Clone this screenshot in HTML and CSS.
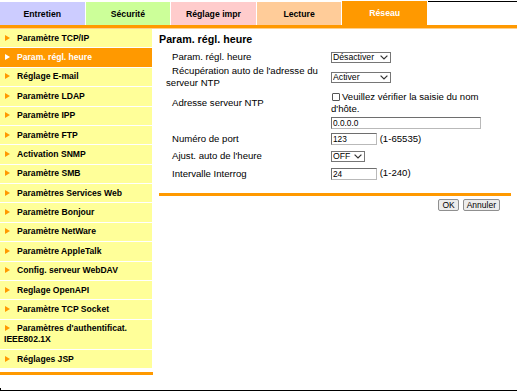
FILE: index.html
```html
<!DOCTYPE html>
<html lang="fr">
<head>
    <meta charset="UTF-8">
    <meta name="viewport" content="width=device-width, initial-scale=1.0">
    <title>Param. régl. heure</title>
    <link rel="stylesheet" href="styles.css">
</head>
<body>
    <div class="tabs">
        <a class="tab tab-maint">Entretien</a>
        <a class="tab tab-security">Sécurité</a>
        <a class="tab tab-print">Réglage impr</a>
        <a class="tab tab-read">Lecture</a>
        <a class="tab active">Réseau</a>
        <div class="tab-rest"></div>
    </div>

    <div class="page">
        <ul class="menu">
            <li><span class="arrow"></span>Paramètre TCP/IP</li>
            <li class="current"><span class="arrow"></span>Param. régl. heure</li>
            <li><span class="arrow"></span>Réglage E-mail</li>
            <li><span class="arrow"></span>Paramètre LDAP</li>
            <li><span class="arrow"></span>Paramètre IPP</li>
            <li><span class="arrow"></span>Paramètre FTP</li>
            <li><span class="arrow"></span>Activation SNMP</li>
            <li><span class="arrow"></span>Paramètre SMB</li>
            <li><span class="arrow"></span>Paramètres Services Web</li>
            <li><span class="arrow"></span>Paramètre Bonjour</li>
            <li><span class="arrow"></span>Paramètre NetWare</li>
            <li><span class="arrow"></span>Paramètre AppleTalk</li>
            <li><span class="arrow"></span>Config. serveur WebDAV</li>
            <li><span class="arrow"></span>Reglage OpenAPI</li>
            <li><span class="arrow"></span>Paramètre TCP Socket</li>
            <li><span class="arrow"></span>Paramètres d'authentificat. IEEE802.1X</li>
            <li><span class="arrow"></span>Réglages JSP</li>
        </ul>

        <div class="content">
            <h2>Param. régl. heure</h2>

            <table class="settings">
                <tr>
                    <td class="label">Param. régl. heure</td>
                    <td class="value">
                        <span class="select w-60">
                            <select><option>Désactiver</option><option>Activer</option></select>
                            <svg width="8" height="5" viewBox="0 0 8 5"><path d="M0.6 0.6 L4 4 L7.4 0.6" /></svg>
                        </span>
                    </td>
                </tr>
                <tr>
                    <td class="label">Récupération auto de l'adresse du serveur NTP</td>
                    <td class="value">
                        <span class="select w-60">
                            <select><option>Activer</option><option>Désactiver</option></select>
                            <svg width="8" height="5" viewBox="0 0 8 5"><path d="M0.6 0.6 L4 4 L7.4 0.6" /></svg>
                        </span>
                    </td>
                </tr>
                <tr>
                    <td class="label">Adresse serveur NTP</td>
                    <td class="value"><label><input type="checkbox" class="check">Veuillez vérifier la saisie du nom d'hôte.</label></td>
                </tr>
                <tr>
                    <td class="label"></td>
                    <td class="value"><input type="text" class="field w-150" value="0.0.0.0"></td>
                </tr>
                <tr class="spaced">
                    <td class="label">Numéro de port</td>
                    <td class="value"><input type="text" class="field w-46" value="123"> (1-65535)</td>
                </tr>
                <tr class="spaced">
                    <td class="label">Ajust. auto de l'heure</td>
                    <td class="value">
                        <span class="select w-34">
                            <select><option>OFF</option><option>ON</option></select>
                            <svg width="8" height="5" viewBox="0 0 8 5"><path d="M0.6 0.6 L4 4 L7.4 0.6" /></svg>
                        </span>
                    </td>
                </tr>
                <tr class="spaced">
                    <td class="label">Intervalle Interrog</td>
                    <td class="value"><input type="text" class="field w-46" value="24"> (1-240)</td>
                </tr>
            </table>

            <div class="actions">
                <button class="btn">OK</button>
                <button class="btn">Annuler</button>
            </div>
        </div>
    </div>

    <div class="frame-bottom"></div>
</body>
</html>
```

FILE: styles.css
```css
body {
    margin: 0;
    font-family: "Liberation Sans", Arial, sans-serif;
    background-color: #fff;
    color: #000;
}

/* top tabs */
.tabs {
    display: flex;
    align-items: flex-end;
    height: 25px;
    border-bottom: 3px solid #ff9900;
    box-shadow: 0 1px 0 #ffcf8c;
}

.tab {
    width: 84.6px;
    height: 23px;
    margin-right: 1px;
    display: flex;
    align-items: center;
    justify-content: center;
    font-size: 8.7px;
    font-weight: bold;
    color: #000;
}

.tab-maint { background-color: #ccccff; }
.tab-security { background-color: #ccff99; }
.tab-print { background-color: #ffcccc; }
.tab-read { background-color: #ffcc99; }

.tab.active {
    height: 24px;
    background-color: #ff9900;
    color: #fff;
}

.tab-rest {
    flex: 1;
    align-self: flex-start;
    height: 1px;
    margin-top: 1px;
    background-color: #000;
}

.page {
    display: flex;
    align-items: flex-start;
    margin-top: 1px;
}

/* left menu */
.menu {
    width: 153px;
    margin: 0;
    padding: 0 0 3px;
    list-style: none;
    border-bottom: 3px solid #ff9900;
}

.menu li {
    margin: 0 1px 1px 0;
    padding: 3.7px 4px;
    line-height: 11px;
    font-size: 8.6px;
    font-weight: bold;
    background-color: #ffff99;
}

.menu li.current {
    background-color: #ff9900;
    color: #fff;
}

.arrow {
    display: inline-block;
    margin: 0 7px 0 1px;
    border-left: 5px solid #ff9900;
    border-top: 3px solid transparent;
    border-bottom: 3px solid transparent;
}

.current .arrow {
    border-left-color: #fff;
}

/* main form */
.content {
    flex: 1;
    padding: 0 6px;
}

h2 {
    margin: 0;
    padding-top: 4px;
    font-size: 10.7px;
    line-height: 13px;
    font-weight: bold;
}

.settings {
    margin: 4px 0 0 7px;
    border-collapse: collapse;
    font-size: 9.6px;
    line-height: 12px;
}

.settings td {
    padding: 1px 0;
    vertical-align: middle;
}

.settings tr.spaced td {
    padding: 2.5px 0;
}

.label {
    width: 157px;
    padding-right: 8px !important;
    text-indent: 6px;
}

.value {
    width: 156px;
}

.check {
    appearance: none;
    width: 8px;
    height: 8px;
    margin: 0 2px 0 1px;
    border: 1px solid #555;
    border-radius: 1px;
    background-color: #fff;
    vertical-align: -1px;
}

.field {
    box-sizing: border-box;
    height: 12px;
    margin: 0;
    padding: 0 1px;
    font-family: inherit;
    font-size: 8.3px;
    border: 1px solid;
    border-color: #6e6e6e #b9b9b9 #b9b9b9 #6e6e6e;
    vertical-align: middle;
}

.w-150 { width: 150px; }
.w-46 { width: 46px; }

.select {
    box-sizing: border-box;
    display: inline-flex;
    align-items: center;
    height: 11px;
    border: 1px solid #767676;
    background-color: #fff;
    vertical-align: middle;
}

.select select {
    flex: 1;
    min-width: 0;
    height: 9px;
    margin: 0;
    padding: 0 0 0 1px;
    border: none;
    appearance: none;
    background: transparent;
    font-family: inherit;
    font-size: 8.7px;
    line-height: 9px;
    color: #000;
}

.select svg {
    margin-right: 2px;
    fill: none;
    stroke: #333;
    stroke-width: 1.2;
}

.w-60 { width: 60px; }
.w-34 { width: 34px; }

.actions {
    display: flex;
    justify-content: flex-end;
    gap: 4px;
    margin-top: 11px;
    padding: 3px 11px 0 0;
    border-top: 3px solid #ff9900;
}

.btn {
    height: 12px;
    padding: 0 3px;
    font-family: inherit;
    font-size: 8.5px;
    line-height: 10px;
    border: 1px solid #8f8f8f;
    border-radius: 2px;
    background-color: #ececec;
    color: #000;
}

.frame-bottom {
    height: 2px;
    margin-top: 13px;
    border-left: 1px solid #000;
    border-bottom: 1px solid #000;
}
```
